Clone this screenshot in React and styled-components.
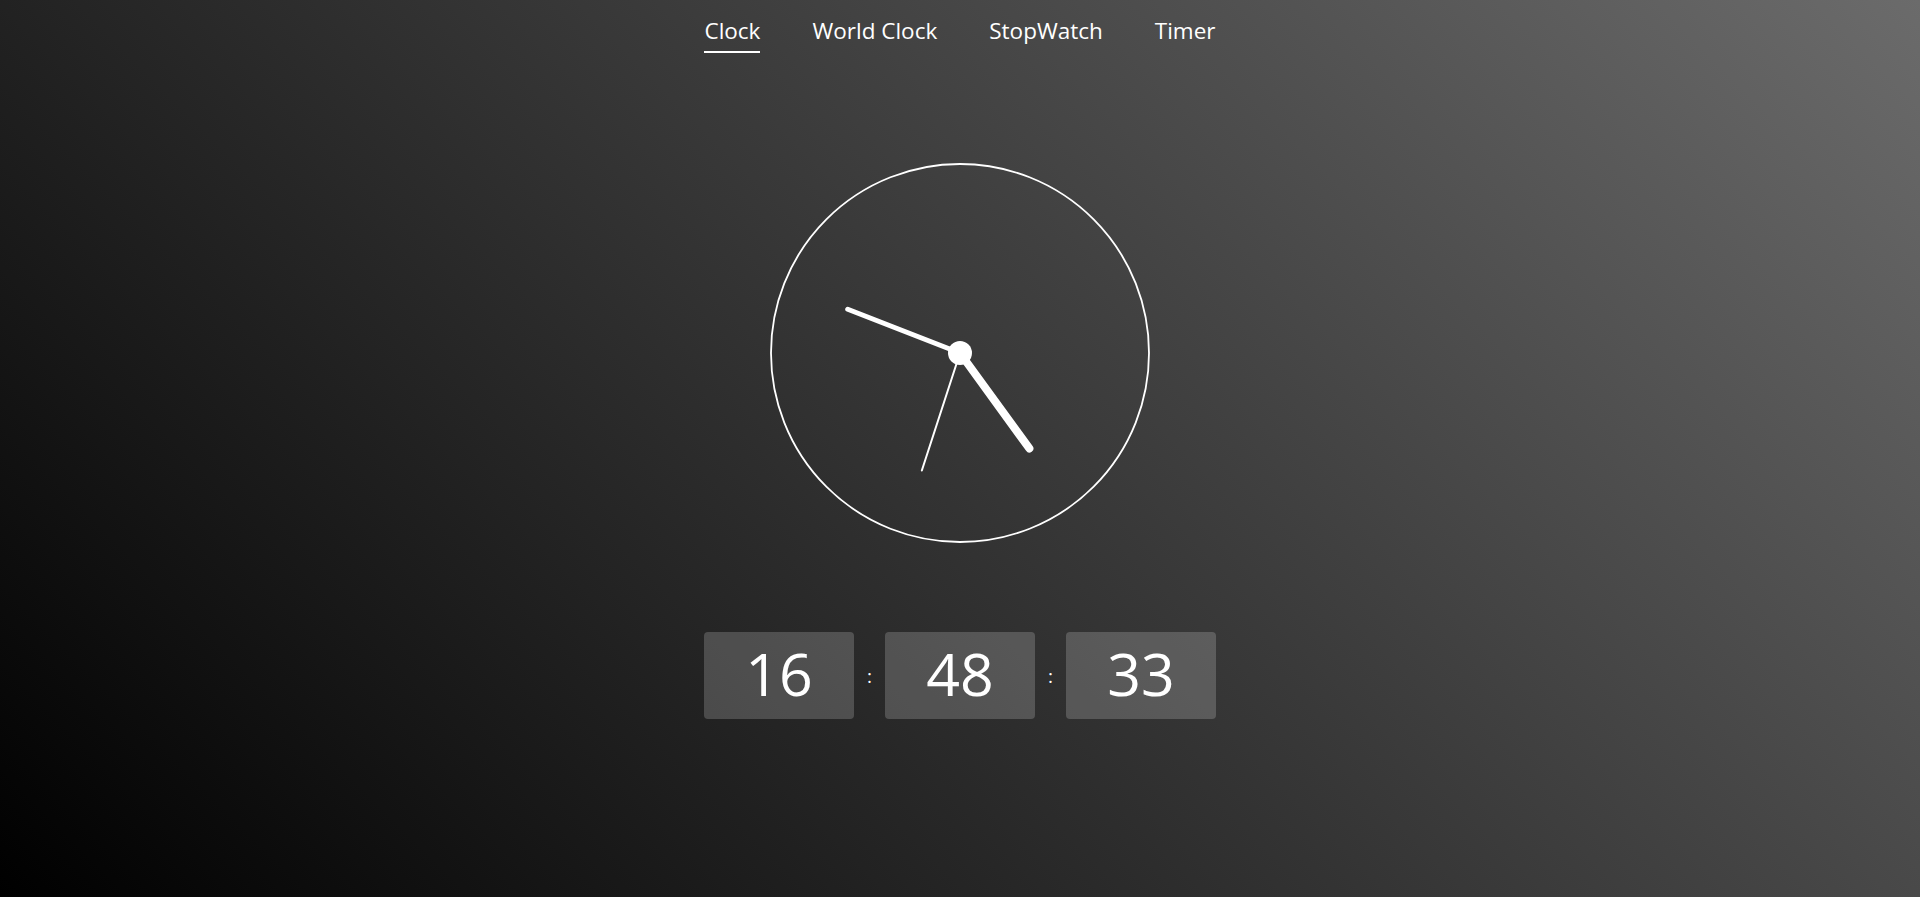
import styled, { createGlobalStyle } from "styled-components";

const GlobalStyle = createGlobalStyle`
  html, body {
    margin: 0;
    padding: 0;
    height: 100%;
  }
  body {
    font-family: "Open Sans", "Noto Sans", Arial, sans-serif;
    color: #fff;
  }
`;

const Page = styled.div`
  width: 100vw;
  height: 100vh;
  background: linear-gradient(45deg, #000 0%, #6b6b6b 100%);
  display: flex;
  flex-direction: column;
  align-items: center;
  overflow: hidden;
`;

const Nav = styled.nav`
  display: flex;
  justify-content: center;
  gap: 52px;
  padding-top: 17px;
`;

const NavItem = styled.a`
  font-size: 22.5px;
  line-height: 28px;
  color: #fff;
  text-decoration: none;
  padding-bottom: 6px;
  border-bottom: 2px solid ${(p) => (p.$active ? "#fff" : "transparent")};
  cursor: pointer;
`;

const Face = styled.svg`
  display: block;
  margin-top: 110px;
  margin-left: -1px;
`;

const Digital = styled.div`
  display: flex;
  align-items: center;
  margin-top: 89px;
`;

const Cell = styled.div`
  width: 150px;
  height: 87px;
  border-radius: 4px;
  background: rgba(255, 255, 255, 0.19);
  display: flex;
  align-items: center;
  justify-content: center;
  font-size: 59px;
  line-height: 60px;
  padding-bottom: 6px;
  box-sizing: border-box;
`;

const Sep = styled.span`
  width: 31px;
  text-align: center;
  font-size: 19px;
`;

const TIME = { h: 16, m: 48, s: 33 };

function handEnd(angle, len) {
  const r = (angle * Math.PI) / 180;
  return { x: 190 + Math.sin(r) * len, y: 190 - Math.cos(r) * len };
}

function AnalogClock({ h, m, s }) {
  const sec = s * 6;
  const min = (m + s / 60) * 6;
  const hr = ((h % 12) + m / 60) * 30;
  const hh = handEnd(hr, 118);
  const mm = handEnd(min, 120.5);
  const ss = handEnd(sec, 123.5);
  return (
    <Face width="380" height="380" viewBox="0 0 380 380">
      <circle cx="190" cy="190" r="189" fill="none" stroke="#fff" strokeWidth="1.8" />
      <line x1="190" y1="190" x2={hh.x} y2={hh.y} stroke="#fff" strokeWidth="8" strokeLinecap="round" />
      <line x1="190" y1="190" x2={mm.x} y2={mm.y} stroke="#fff" strokeWidth="5" strokeLinecap="round" />
      <line x1="190" y1="190" x2={ss.x} y2={ss.y} stroke="#fff" strokeWidth="2" strokeLinecap="round" />
      <circle cx="190" cy="190" r="12" fill="#fff" />
    </Face>
  );
}

const pad = (n) => String(n).padStart(2, "0");

export default function App() {
  const tabs = ["Clock", "World Clock", "StopWatch", "Timer"];
  return (
    <>
      <GlobalStyle />
      <Page>
        <Nav>
          {tabs.map((t, i) => (
            <NavItem key={t} $active={i === 0}>
              {t}
            </NavItem>
          ))}
        </Nav>
        <AnalogClock {...TIME} />
        <Digital>
          <Cell>{pad(TIME.h)}</Cell>
          <Sep>:</Sep>
          <Cell>{pad(TIME.m)}</Cell>
          <Sep>:</Sep>
          <Cell>{pad(TIME.s)}</Cell>
        </Digital>
      </Page>
    </>
  );
}
